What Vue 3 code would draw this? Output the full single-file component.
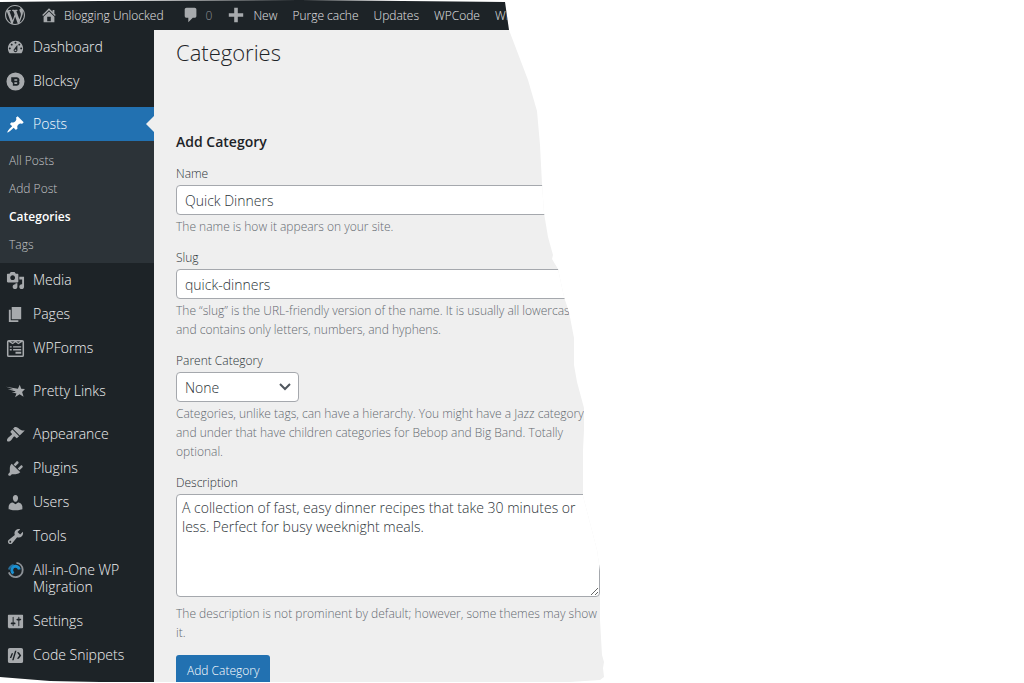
<script setup>
import { ref } from 'vue'

const name = ref('Quick Dinners')
const slug = ref('quick-dinners')
const parent = ref('None')
const description = ref(
  'A collection of fast, easy dinner recipes that take 30 minutes or less. Perfect for busy weeknight meals.'
)

const icons = {
  wordpress:
    'M20 10c0-5.51-4.49-10-10-10C4.48 0 0 4.49 0 10c0 5.52 4.48 10 10 10 5.51 0 10-4.48 10-10zM7.78 15.37L4.37 6.22c.55-.02 1.17-.08 1.17-.08.5-.06.44-1.13-.06-1.11 0 0-1.45.11-2.37.11-.18 0-.37 0-.58-.01C4.12 2.69 6.87 1.11 10 1.11c2.33 0 4.45.87 6.05 2.34-.68-.11-1.65.39-1.65 1.58 0 .74.45 1.36.9 2.1.35.61.55 1.36.55 2.46 0 1.49-1.4 5-1.4 5l-3.03-8.37c.54-.02.82-.17.82-.17.5-.05.44-1.25-.06-1.22 0 0-1.44.12-2.38.12-.87 0-2.33-.12-2.33-.12-.5-.03-.56 1.2-.06 1.22l.92.08 1.26 3.41zM17.41 10c.24-.64.74-1.87.43-4.25.7 1.29 1.05 2.71 1.05 4.25 0 3.29-1.73 6.24-4.4 7.78.97-2.59 1.94-5.2 2.92-7.78zM6.1 18.09C3.12 16.65 1.11 13.53 1.11 10c0-1.3.23-2.48.72-3.59C3.25 10.3 4.67 14.2 6.1 18.09zm4.03-6.63l2.58 6.98c-.86.29-1.76.45-2.71.45-.79 0-1.57-.11-2.29-.33.81-2.38 1.62-4.74 2.42-7.1z',
  home: 'M16 8.5l1.53 1.53-1.06 1.06L10 4.6l-6.47 6.49-1.06-1.06L10 2.5l4 4v-2h2v4zm-6-2.46l6 5.99V18H4v-5.97zM12 17v-5H8v5h4z',
  comment: 'M5 2h9c1.1 0 2 .9 2 2v7c0 1.1-.9 2-2 2h-2l-5 5v-5H5c-1.1 0-2-.9-2-2V4c0-1.1.9-2 2-2z',
  plus: 'M8 2h4v6h6v4h-6v6H8v-6H2V8h6z',
  dashboard:
    'M3.76 16h12.48c1.1-1.37 1.76-3.11 1.76-5 0-4.42-3.58-8-8-8s-8 3.58-8 8c0 1.89.66 3.63 1.76 5zM10 4c.55 0 1 .45 1 1s-.45 1-1 1-1-.45-1-1 .45-1 1-1zM6 6c.55 0 1 .45 1 1s-.45 1-1 1-1-.45-1-1 .45-1 1-1zm8 0c.55 0 1 .45 1 1s-.45 1-1 1-1-.45-1-1 .45-1 1-1zm-5.37 5.55L12 7v6c0 1.1-.9 2-2 2s-2-.9-2-2c0-.57.24-1.08.63-1.45zM4 10c.55 0 1 .45 1 1s-.45 1-1 1-1-.45-1-1 .45-1 1-1zm12 0c.55 0 1 .45 1 1s-.45 1-1 1-1-.45-1-1 .45-1 1-1zm-5 3c0-.55-.45-1-1-1s-1 .45-1 1 .45 1 1 1 1-.45 1-1z',
  blocksy:
    'M10 0.500a9.500 9.500 0 1 0 0 19a9.500 9.500 0 1 0 0-19zM5.500 5.500h6a3 3 0 0 1 2.300 4.500a3 3 0 0 1-2.300 4.500H7.200V11.700L5.500 10zM8.800 7.600v1.600h2.400a.8.8 0 0 0 0-1.600zM8.800 10.900v1.600h2.400a.8.8 0 0 0 0-1.600z',
  post: 'M10.44 3.02l1.82-1.82 6.36 6.35-1.83 1.82c-1.05-.68-2.48-.57-3.41.36l-.75.75c-.92.93-1.04 2.35-.35 3.41l-1.83 1.82-2.41-2.41-2.8 2.79c-.42.42-3.38 2.71-3.8 2.29s1.86-3.39 2.28-3.81l2.79-2.79L4.1 9.36l1.83-1.82c1.05.69 2.48.57 3.4-.36l.75-.75c.93-.92 1.05-2.35.36-3.41z',
  media:
    'M13 11V4c0-.55-.45-1-1-1h-1.67L9 1H5L3.67 3H2c-.55 0-1 .45-1 1v7c0 .55.45 1 1 1h10c.55 0 1-.45 1-1zM7 4.5c1.38 0 2.5 1.12 2.5 2.5S8.38 9.5 7 9.5 4.5 8.38 4.5 7 5.62 4.5 7 4.5zM14 6h5v10.5c0 1.38-1.12 2.5-2.5 2.5S14 17.88 14 16.5s1.12-2.5 2.5-2.5c.17 0 .34.02.5.05V9h-3V6zm-4 8.05V13h2v3.5c0 1.38-1.12 2.5-2.5 2.5S7 17.88 7 16.5 8.12 14 9.5 14c.17 0 .34.02.5.05z',
  page: 'M6 15V2h10v13H6zm-1 1h8v2H3V5h2v11z',
  forms:
    'M3 1h14a2 2 0 0 1 2 2v14a2 2 0 0 1-2 2H3a2 2 0 0 1-2-2V3a2 2 0 0 1 2-2zM2.600 3v14.400h14.800V3L13 5.500L10 3.500L7 5.500zM5 2.500L7 4L9 2.500zM11 2.500L13 4L15 2.500zM4 7.500h2v1.500H4zM7.500 7.500H16V9H7.500zM4 10.500h2V12H4zM7.500 10.500H16V12H7.500zM10 13.500h6V15.500h-6z',
  star: 'M0 5L12.500 7L14.500 3L16 7.200L20 7.400L17 10.500L18.500 15.500L14.300 12.800L9.500 16L11 12L6 10.800L10 10.600L9.500 9.800L2 7.500L8 7.600z',
  appearance:
    'M14.48 11.06L7.41 3.99l1.5-1.5c.5-.56 2.3-.47 3.51.32 1.21.8 1.43 1.28 2.91 2.1 1.18.64 2.45 1.26 4.45.85zm-.71.71L6.7 4.7 4.93 6.47c-.39.39-.39 1.02 0 1.41l1.06 1.06c.39.39.39 1.03 0 1.42-.6.6-1.43 1.11-2.21 1.69-.35.26-.7.53-1.01.84C1.43 14.23.4 16.08 1.4 17.07c.99 1 2.84-.03 4.18-1.36.31-.31.58-.66.85-1.02.57-.78 1.08-1.61 1.69-2.21.39-.39 1.02-.39 1.41 0l1.06 1.06c.39.39 1.02.39 1.41 0z',
  plugins:
    'M13.11 4.36L9.87 7.6 8 5.73l3.24-3.24c.35-.34 1.05-.2 1.56.32.52.51.66 1.21.31 1.55zm-8 1.77l.91-1.12 9.01 9.01-1.19.84c-.71.71-2.63 1.16-3.82 1.16H6.14L4.9 17.26c-.59.59-1.54.59-2.12 0-.59-.58-.59-1.53 0-2.12l1.24-1.24v-3.88c0-1.13.4-3.19 1.09-3.89zm7.26 3.97l3.24-3.24c.34-.35 1.04-.21 1.55.31.52.51.66 1.21.31 1.55l-3.24 3.25z',
  users:
    'M10 9.25c-2.27 0-2.73-3.44-2.73-3.44C7 4.02 7.82 2 9.97 2c2.16 0 2.98 2.02 2.71 3.81 0 0-.41 3.44-2.68 3.44zm0 2.57L12.72 10c2.39 0 4.52 2.33 4.52 4.53v2.49s-3.65 1.13-7.24 1.13c-3.65 0-7.24-1.13-7.24-1.13v-2.49c0-2.25 1.94-4.48 4.47-4.48z',
  tools:
    'M16.68 9.77c-1.34 1.34-3.3 1.67-4.95.99l-5.41 6.52c-.99.99-2.59.99-3.58 0s-.99-2.59 0-3.57l6.52-5.42c-.68-1.65-.35-3.61.99-4.95 1.28-1.28 3.12-1.62 4.72-1.06l-2.89 2.89 2.82 2.82 2.86-2.87c.53 1.58.18 3.39-1.08 4.65zM3.81 16.21c.4.39 1.04.39 1.43 0 .4-.4.4-1.04 0-1.43-.39-.4-1.03-.4-1.43 0-.39.39-.39 1.03 0 1.43z',
  settings:
    'M18 16V4c0-.55-.45-1-1-1H3c-.55 0-1 .45-1 1v12c0 .55.45 1 1 1h14c.55 0 1-.45 1-1zM8 11h1c.55 0 1 .45 1 1s-.45 1-1 1H8v1.5c0 .28-.22.5-.5.5s-.5-.22-.5-.5V13H6c-.55 0-1-.45-1-1s.45-1 1-1h1V5.5c0-.28.22-.5.5-.5s.5.22.5.5V11zm5-2h-1c-.55 0-1-.45-1-1s.45-1 1-1h1V5.5c0-.28.22-.5.5-.5s.5.22.5.5V7h1c.55 0 1 .45 1 1s-.45 1-1 1h-1v5.5c0 .28-.22.5-.5.5s-.5-.22-.5-.5V9z',
  code: 'M4 2h12a2 2 0 0 1 2 2v12a2 2 0 0 1-2 2H4a2 2 0 0 1-2-2V4a2 2 0 0 1 2-2zM9.500 5L6.500 15H8L11 5zM6 7.500L4 12.500H5.500L7.500 7.500zM11.500 6.500L14 10L11.500 13.500H13.500L16 10L13.500 6.500z'
}

const menu = [
  [
    { label: 'Dashboard', icon: 'dashboard' },
    { label: 'Blocksy', icon: 'blocksy' }
  ],
  [
    { label: 'Posts', icon: 'post', current: true, sub: ['All Posts', 'Add Post', 'Categories', 'Tags'] },
    { label: 'Media', icon: 'media' },
    { label: 'Pages', icon: 'page' },
    { label: 'WPForms', icon: 'forms' }
  ],
  [{ label: 'Pretty Links', icon: 'star' }],
  [
    { label: 'Appearance', icon: 'appearance' },
    { label: 'Plugins', icon: 'plugins' },
    { label: 'Users', icon: 'users' },
    { label: 'Tools', icon: 'tools' },
    { label: 'All-in-One WP Migration', icon: 'migration' },
    { label: 'Settings', icon: 'settings' },
    { label: 'Code Snippets', icon: 'code' }
  ]
]
</script>

<template>
  <div class="screen">
    <header class="bar">
      <a href="#" class="logo" aria-label="WordPress">
        <svg viewBox="0 0 20 20"><path :d="icons.wordpress" /></svg>
      </a>
      <a href="#" class="site">
        <svg viewBox="0 0 20 20"><path :d="icons.home" /></svg>Blogging Unlocked
      </a>
      <a href="#" class="comments">
        <svg viewBox="0 0 20 20"><path :d="icons.comment" /></svg><span>0</span>
      </a>
      <a href="#" class="new">
        <svg viewBox="0 0 20 20"><path :d="icons.plus" /></svg>New
      </a>
      <a href="#">Purge cache</a>
      <a href="#">Updates</a>
      <a href="#">WPCode</a>
      <a href="#">WPForms</a>
    </header>
    <div class="body">
      <nav class="side">
        <ul v-for="(group, g) in menu" :key="g" class="group">
          <li v-for="item in group" :key="item.label">
            <a href="#" class="item" :class="{ current: item.current }">
              <svg v-if="item.icon === 'migration'" viewBox="0 0 20 20" class="swirl">
                <path class="ring" d="M11 2a7.500 7.500 0 1 1-8 10" />
                <path class="arc" d="M3 9a7 7 0 0 1 5-5" />
                <path class="core" d="M8 13a4 4 0 1 1 6-4" />
              </svg>
              <svg v-else viewBox="0 0 20 20"><path fill-rule="evenodd" :d="icons[item.icon]" /></svg>
              <span>{{ item.label }}</span>
            </a>
            <ul v-if="item.sub" class="sub">
              <li v-for="s in item.sub" :key="s">
                <a href="#" :class="{ active: s === 'Categories' }">{{ s }}</a>
              </li>
            </ul>
          </li>
        </ul>
      </nav>
      <main class="main">
        <h1>Categories</h1>
        <form class="form" @submit.prevent>
          <h2>Add Category</h2>
          <div class="field">
            <label for="name">Name</label>
            <input id="name" v-model="name" type="text" />
            <p>The name is how it appears on your site.</p>
          </div>
          <div class="field">
            <label for="slug">Slug</label>
            <input id="slug" v-model="slug" type="text" />
            <p>The “slug” is the URL-friendly version of the name. It is usually all lowercase and contains only letters, numbers, and hyphens.</p>
          </div>
          <div class="field">
            <label for="parent">Parent Category</label>
            <div class="pick">
              <select id="parent" v-model="parent"><option>None</option></select>
              <svg viewBox="0 0 12 8"><path d="M1 1l5 5 5-5" /></svg>
            </div>
            <p>Categories, unlike tags, can have a hierarchy. You might have a Jazz category, and under that have children categories for Bebop and Big Band. Totally optional.</p>
          </div>
          <div class="field area">
            <label for="description">Description</label>
            <textarea id="description" v-model="description"></textarea>
            <p>The description is not prominent by default; however, some themes may show it.</p>
          </div>
          <button type="submit">Add Category</button>
        </form>
      </main>
    </div>
  </div>
</template>

<style>
html,
body {
  background: #fff;
}
</style>

<style scoped>
* {
  box-sizing: border-box;
}
.screen {
  display: flex;
  flex-direction: column;
  height: 100vh;
  overflow: hidden;
  background: #efefef;
  color: #2c3338;
  font-family: 'Open Sans', 'Noto Sans', sans-serif;
  font-size: 12px;
  font-weight: 300;
  /* torn-paper outline */
  clip-path: polygon(
    0 2px, 100px 1px, 300px 0, 505px 2px, 509px 30px, 528px 80px, 537px 111px, 540px 145px,
    542px 184px, 544px 213px, 548px 237px, 553px 255px, 552px 259px, 558px 269px, 564px 297px,
    569px 312px, 574px 338px, 574px 365px, 577px 382px, 584px 408px, 584px 430px, 583px 450px,
    583px 496px, 597px 550px, 600px 571px, 600px 620px, 602px 655px, 604px 662px, 603px 668px,
    604px 677px, 600px 680px, 570px 682px, 100px 682px, 50px 681px, 0 677px
  );
}
ul,
h1,
h2,
p {
  margin: 0;
  padding: 0;
  list-style: none;
}
a {
  color: inherit;
  text-decoration: none;
}
svg {
  flex: none;
  fill: #a7aaad;
}
.bar {
  display: flex;
  flex: none;
  align-items: center;
  gap: 15px;
  height: 30px;
  padding-left: 5px;
  background: #1d2327;
  color: #e4e4e6;
  white-space: nowrap;
}
.bar a {
  display: flex;
  align-items: center;
  gap: 6px;
}
.bar svg {
  width: 18px;
  height: 18px;
}
.bar .logo svg {
  width: 20px;
  height: 20px;
}
.bar .comments {
  margin-left: 3px;
}
.bar .comments span {
  color: #8c9196;
}
.bar .new {
  gap: 8px;
}
.body {
  display: flex;
  flex: 1;
  min-height: 0;
}
.side {
  flex: none;
  width: 154px;
  background: #1d2327;
  color: #f0f0f1;
}
.group + .group {
  margin-top: 9px;
}
.item {
  position: relative;
  display: flex;
  gap: 8px;
  padding: 8px 20px 9px 6px;
  font-size: 14px;
  line-height: 17px;
}
.item svg {
  width: 19px;
  height: 19px;
  margin-bottom: -2px;
}
.current {
  background: #2271b1;
  color: #fff;
}
.current svg {
  fill: #fff;
}
.current::after {
  content: '';
  position: absolute;
  top: 9px;
  right: 0;
  border: 8px solid transparent;
  border-left: 0;
  border-right-color: #efefef;
}
.swirl path {
  fill: none;
  stroke: #8c9196;
  stroke-width: 2;
}
.swirl .core {
  stroke: #1a8fd0;
  stroke-width: 3;
}
.swirl .arc {
  stroke: #2a6f9a;
}
.sub {
  padding: 6px 9px 4px;
  background: #2c3338;
  color: #c3c4c7;
  line-height: 28px;
}
.sub a {
  display: block;
}
.sub .active {
  color: #fff;
  font-weight: 600;
}
.main {
  flex: 1;
  min-width: 0;
  padding: 7px 0 0 22px;
}
h1 {
  font-size: 22px;
  font-weight: 300;
  line-height: 30px;
  color: #1d2327;
}
.form {
  width: 50%;
  margin-top: 65px;
}
h2 {
  margin-bottom: 13px;
  font-size: 14px;
  font-weight: 600;
  line-height: 20px;
  color: #1d2327;
}
.field {
  display: flex;
  flex-direction: column;
  gap: 2px;
  margin-bottom: 13px;
}
label {
  line-height: 18px;
}
.field p {
  padding-right: 2px;
  line-height: 19px;
  color: #646970;
}
input,
select,
textarea {
  width: 100%;
  height: 30px;
  padding: 0 8px;
  border: 1px solid #a5a8ad;
  border-radius: 4px;
  background: #fff;
  color: #2c3338;
  font: inherit;
  font-size: 14px;
}
.pick {
  position: relative;
  width: 123px;
}
select {
  display: block;
  appearance: none;
}
.pick svg {
  position: absolute;
  top: 11px;
  right: 8px;
  width: 12px;
  height: 8px;
  fill: none;
  stroke: #50575e;
  stroke-width: 2;
}
textarea {
  height: 103px;
  padding: 3px 5px;
  line-height: 19px;
  resize: vertical;
}
.area p {
  margin-top: 5px;
}
button {
  height: 30px;
  padding: 0 11px;
  border: 0;
  border-radius: 3px;
  background: #2271b1;
  color: #fff;
  font: inherit;
}
</style>
